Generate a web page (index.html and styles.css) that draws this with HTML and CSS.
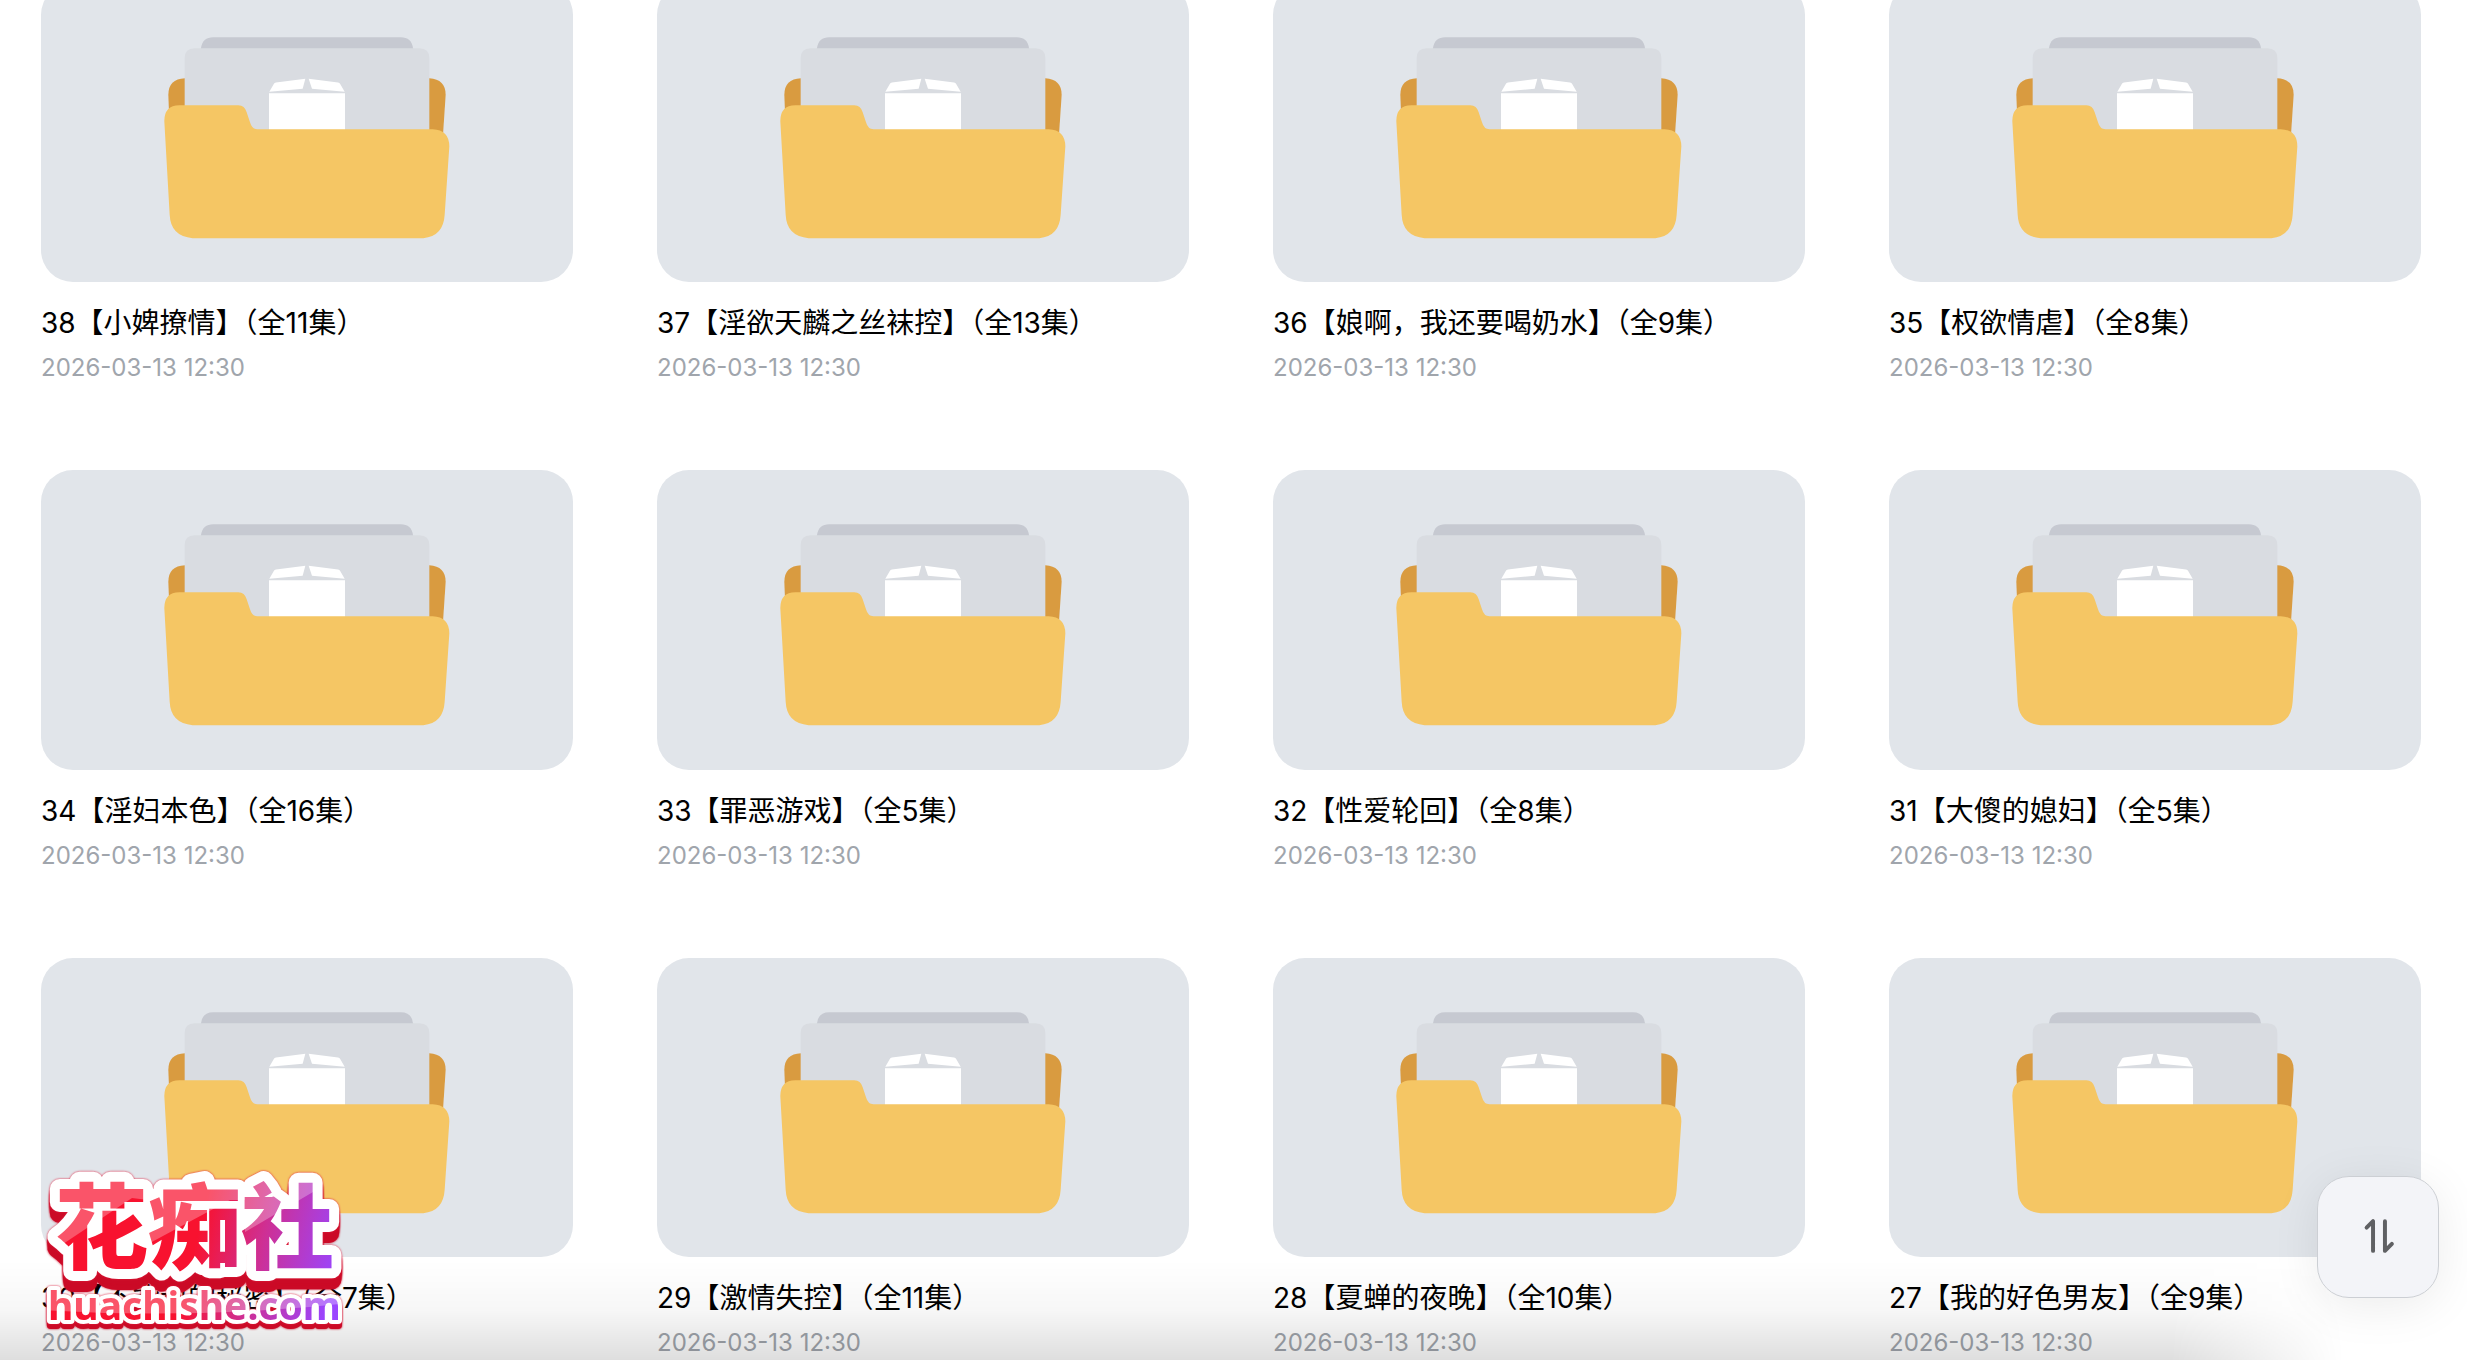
FILE: index.html
```html
<!DOCTYPE html>
<html lang="zh-CN">
<head>
    <meta charset="UTF-8">
    <meta name="viewport" content="width=device-width, initial-scale=1.0">
    <title>文件夹</title>
    <link rel="stylesheet" href="styles.css">
</head>
<body>
    <!-- Shared folder drawing -->
    <svg class="sprite" aria-hidden="true">
        <symbol id="folder" viewBox="0 0 1596 897">
            <g transform="translate(327 90)">
                <path fill="#d99b40" d="M55 245Q55 197 105 195H838Q887 198 887 245L878 380H60Z"/>
                <path fill="#c6c9d1" d="M153 105Q157 72 190 72H752Q785 72 789 105V130H153Z"/>
                <path fill="#d9dce1" d="M104 135Q104 105 134 105H808Q838 105 838 135V380H104Z"/>
                <path fill="#fff" d="M357 240H585V360H357ZM358 236L371 213Q373 209 378 208L466 197L458 227ZM584 236L571 213Q569 209 564 208L476 197L486 227Z"/>
                <path fill="#f5c664" d="M43 325Q42 277 88 276H265Q284 276 290 297L300 327Q306 348 322 348H848Q898 350 898 400L884 605Q880 670 820 675H128Q62 670 59 605Z"/>
            </g>
        </symbol>
    </svg>

    <main class="file-grid">
        <a class="file" href="#">
            <svg class="thumb"><use href="#folder"/></svg>
            <span class="name">38【小婢撩情】（全11集）</span>
            <time class="date">2026-03-13 12:30</time>
        </a>
        <a class="file" href="#">
            <svg class="thumb"><use href="#folder"/></svg>
            <span class="name">37【淫欲天麟之丝袜控】（全13集）</span>
            <time class="date">2026-03-13 12:30</time>
        </a>
        <a class="file" href="#">
            <svg class="thumb"><use href="#folder"/></svg>
            <span class="name">36【娘啊，我还要喝奶水】（全9集）</span>
            <time class="date">2026-03-13 12:30</time>
        </a>
        <a class="file" href="#">
            <svg class="thumb"><use href="#folder"/></svg>
            <span class="name">35【权欲情虐】（全8集）</span>
            <time class="date">2026-03-13 12:30</time>
        </a>

        <a class="file" href="#">
            <svg class="thumb"><use href="#folder"/></svg>
            <span class="name">34【淫妇本色】（全16集）</span>
            <time class="date">2026-03-13 12:30</time>
        </a>
        <a class="file" href="#">
            <svg class="thumb"><use href="#folder"/></svg>
            <span class="name">33【罪恶游戏】（全5集）</span>
            <time class="date">2026-03-13 12:30</time>
        </a>
        <a class="file" href="#">
            <svg class="thumb"><use href="#folder"/></svg>
            <span class="name">32【性爱轮回】（全8集）</span>
            <time class="date">2026-03-13 12:30</time>
        </a>
        <a class="file" href="#">
            <svg class="thumb"><use href="#folder"/></svg>
            <span class="name">31【大傻的媳妇】（全5集）</span>
            <time class="date">2026-03-13 12:30</time>
        </a>

        <a class="file" href="#">
            <svg class="thumb"><use href="#folder"/></svg>
            <span class="name">30【不能说的秘密】（全7集）</span>
            <time class="date">2026-03-13 12:30</time>
        </a>
        <a class="file" href="#">
            <svg class="thumb"><use href="#folder"/></svg>
            <span class="name">29【激情失控】（全11集）</span>
            <time class="date">2026-03-13 12:30</time>
        </a>
        <a class="file" href="#">
            <svg class="thumb"><use href="#folder"/></svg>
            <span class="name">28【夏蝉的夜晚】（全10集）</span>
            <time class="date">2026-03-13 12:30</time>
        </a>
        <a class="file" href="#">
            <svg class="thumb"><use href="#folder"/></svg>
            <span class="name">27【我的好色男友】（全9集）</span>
            <time class="date">2026-03-13 12:30</time>
        </a>
    </main>

    <div class="bottom-fade"></div>

    <!-- Site logo: gradient face with a gloss, white outline, red base -->
    <svg class="site-logo" viewBox="0 0 320 180" role="img" aria-label="花痴社 huachishe.com">
        <defs>
            <linearGradient id="logoColors" gradientUnits="userSpaceOnUse" x1="20" y1="30" x2="300" y2="100">
                <stop offset="0" stop-color="#f8122f"/>
                <stop offset="0.5" stop-color="#f8122f"/>
                <stop offset="0.72" stop-color="#cf2f92"/>
                <stop offset="1" stop-color="#9a45ff"/>
            </linearGradient>
            <pattern id="logoFill" patternUnits="userSpaceOnUse" width="320" height="180">
                <rect width="320" height="180" fill="url(#logoColors)"/>
                <path fill="#fff" fill-opacity="0.28" d="M0 0H320L290 22L205 72V40L190 40L108 84V40L92 38L20 86H0ZM0 130H320V142Q160 160 0 150Z"/>
            </pattern>
        </defs>
        <text class="logo-title" x="15" y="102">花痴社</text>
        <text class="logo-domain" x="8" y="160">huachishe.com</text>
    </svg>

    <button class="sort-button" type="button" aria-label="排序">
        <svg viewBox="0 0 121 121">
            <path d="M49 51L55.500 44.500V74.500M67.500 44.500V74.500L74.500 67.500"/>
        </svg>
    </button>
</body>
</html>
```

FILE: styles.css
```css
body {
    margin: 0;
    height: 100vh;
    overflow: hidden;
    background-color: #fff;
    font-family: Inter, 'Noto Sans CJK SC', sans-serif;
}
.sprite {
    position: absolute;
    width: 0;
    height: 0;
}
/* list is scrolled a little past the first row */
.file-grid {
    display: grid;
    grid-template-columns: repeat(4, 1fr);
    column-gap: 84px;
    row-gap: 82px;
    margin-top: -17px;
    padding: 0 46px 0 41px;
}
.file {
    display: flex;
    flex-direction: column;
    color: #000;
    text-decoration: none;
}
.thumb {
    width: 100%;
    aspect-ratio: 16 / 9;
    border-radius: 32px;
    background-color: #e1e5ea;
}
.name {
    margin-top: 20px;
    font-size: 28px;
    line-height: 42px;
    white-space: nowrap;
}
.date {
    margin-top: 4px;
    font-size: 24px;
    line-height: 40px;
    color: #a0a5ac;
}
.bottom-fade {
    position: fixed;
    left: 0;
    right: 0;
    bottom: 0;
    height: 100px;
    background: linear-gradient(rgba(0, 0, 0, 0), rgba(0, 0, 0, 0.03) 50%, rgba(0, 0, 0, 0.13));
    mask-image: linear-gradient(to right, #000 88%, transparent 95%);
    pointer-events: none;
}
.site-logo {
    position: fixed;
    left: 40px;
    bottom: 20px;
    width: 320px;
    height: 180px;
    overflow: visible;
}
.site-logo text {
    fill: url(#logoFill);
    stroke: #fff;
    stroke-linejoin: round;
    paint-order: stroke;
}
.logo-title {
    font-family: 'Noto Sans CJK SC', sans-serif;
    font-size: 93px;
    font-weight: 900;
    stroke-width: 20px;
    filter: drop-shadow(0 0 1px #e02040) drop-shadow(0 5px 0 #cb0a26) drop-shadow(0 6px 0 #cb0a26);
}
.logo-domain {
    font-family: 'Noto Sans', sans-serif;
    font-size: 39px;
    font-weight: 700;
    stroke-width: 8px;
    filter: drop-shadow(0 0 1px #e02040) drop-shadow(0 5px 0 #cb0a26);
}
.sort-button {
    position: fixed;
    right: 28px;
    bottom: 62px;
    width: 122px;
    height: 122px;
    padding: 0;
    border: 1px solid #cccfd4;
    border-radius: 32px;
    background-color: #f3f4f8;
    box-shadow: 0 8px 48px rgba(0, 0, 0, 0.08);
    cursor: pointer;
}
.sort-button svg {
    display: block;
    width: 100%;
    fill: none;
    stroke: #5f6063;
    stroke-width: 4;
    stroke-linecap: round;
    stroke-linejoin: round;
}
```
